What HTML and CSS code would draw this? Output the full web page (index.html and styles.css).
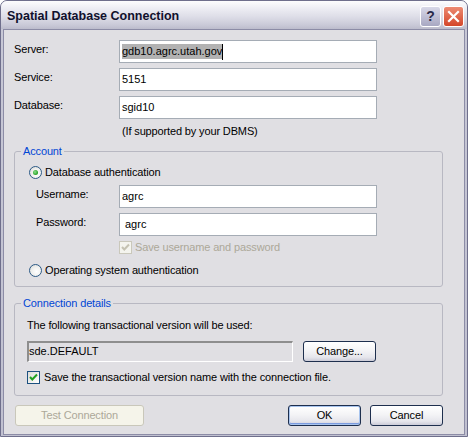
FILE: index.html
```html
<!DOCTYPE html>
<html>
<head>
<meta charset="utf-8">
<title>Spatial Database Connection</title>
<link rel="stylesheet" href="styles.css">
</head>
<body>
<div class="window">
  <div class="titlebar">
    <span class="title">Spatial Database Connection</span>
    <div class="caption-btns">
      <span class="cbtn help">?</span>
      <span class="cbtn close"><svg width="13" height="13" viewBox="0 0 13 13"><path d="M2 2 L11 11 M11 2 L2 11" stroke="#fff" stroke-width="2.2" stroke-linecap="square"/></svg></span>
    </div>
  </div>
  <div class="client">
    <div class="form-grid">
      <label class="lbl">Server:</label>
      <div class="tb"><span class="sel">gdb10.agrc.utah.gov</span><span class="caret"></span></div>
      <label class="lbl">Service:</label>
      <div class="tb">5151</div>
      <label class="lbl">Database:</label>
      <div class="tb">sgid10</div>
    </div>
    <div class="note">(If supported by your DBMS)</div>

    <fieldset class="group account">
      <legend>Account</legend>
      <div class="opt-row radio-first"><span class="radio on"></span><span>Database authentication</span></div>
      <div class="auth-grid">
        <label class="lbl">Username:</label>
        <div class="tb">agrc</div>
        <label class="lbl">Password:</label>
        <div class="tb pw">agrc</div>
      </div>
      <div class="opt-row save-pw disabled"><span class="check off"><svg width="11" height="11" viewBox="0 0 11 11"><path d="M2 5 L4.3 7.5 L9 2.5" fill="none" stroke="#c5c2b2" stroke-width="2"/></svg></span><span>Save username and password</span></div>
      <div class="opt-row radio-os"><span class="radio"></span><span>Operating system authentication</span></div>
    </fieldset>

    <fieldset class="group conn">
      <legend>Connection details</legend>
      <div class="conn-text">The following transactional version will be used:</div>
      <div class="version-row">
        <div class="vbox">sde.DEFAULT</div>
        <span class="btn change">Change...</span>
      </div>
      <div class="opt-row save-ver"><span class="check"><svg width="11" height="11" viewBox="0 0 11 11"><path d="M2 5 L4.3 7.5 L9 2.5" fill="none" stroke="#21a121" stroke-width="2"/></svg></span><span>Save the transactional version name with the connection file.</span></div>
    </fieldset>

    <div class="btn-row">
      <span class="btn test disabled">Test Connection</span>
      <span class="btn ok default">OK</span>
      <span class="btn cancel">Cancel</span>
    </div>
  </div>
</div>
</body>
</html>
```
FILE: styles.css
```css
* { box-sizing: border-box; }
html, body { margin: 0; padding: 0; background: #ffffff; }
body {
  font-family: "Liberation Sans", Arial, sans-serif;
  font-size: 11px;
  line-height: 13px;
  letter-spacing: -0.14px;
  color: #000;
}
.window {
  width: 468px;
  height: 437px;
  border: 1px solid #6f6f8c;
  border-radius: 7px 7px 0 0;
  background: linear-gradient(to bottom, #c8c8d6, #c0c0d0);
  overflow: hidden;
}
.titlebar {
  height: 28px;
  display: flex;
  align-items: center;
  padding: 0 3px 0 6px;
  background: linear-gradient(to bottom, #fdfdfe 0%, #eeeef4 25%, #dedee8 55%, #cacad8 85%, #bcbccc 100%);
}
.title {
  flex: 1;
  font-weight: bold;
  font-size: 12.5px;
  letter-spacing: 0;
  color: #10102c;
  padding-top: 2px;
}
.caption-btns { display: flex; gap: 2px; margin-top: 2px; }
.cbtn {
  width: 21px;
  height: 21px;
  border-radius: 3px;
  border: 1px solid #ffffff;
  display: flex;
  align-items: center;
  justify-content: center;
}
.help {
  background: linear-gradient(to bottom, #d8d8e8, #a8a8c2);
  color: #2a2a48;
  font-weight: bold;
  font-size: 14px;
  letter-spacing: 0;
}
.close {
  background: linear-gradient(to bottom, #ec8a72, #d4462a);
}
.client {
  margin: 0 2px 2px;
  border: 1px solid #8c8ca6;
  background: #e0dfe3;
  padding: 10px 21px 8px 10px;
}
.form-grid {
  display: grid;
  grid-template-columns: 105px 258px;
  row-gap: 5px;
}
.lbl { padding-top: 3px; }
.tb {
  height: 23px;
  border: 1px solid #a5acb5;
  background: #fff;
  padding-left: 2px;
  line-height: 21px;
  letter-spacing: 0;
  display: flex;
  align-items: center;
}
.tb.pw { padding-left: 5px; }
.sel { background: #b2b2b2; line-height: 15px; }
.caret { width: 1px; height: 16px; background: #000; }
.note { margin: 6px 0 0 108px; }

.group {
  margin: 0;
  padding: 0;
  border: 1px solid #b8b8c2;
  border-radius: 3px;
  min-width: 0;
}
.group legend {
  margin-left: 6px;
  padding: 0 2px;
  color: #0046d5;
  line-height: 13px;
}
.account { margin-top: 7px; padding-bottom: 9px; }
.conn { margin-top: 10px; padding-bottom: 11px; }

.opt-row {
  display: flex;
  align-items: center;
  height: 13px;
}
.radio-first { margin: 8px 0 0 14px; gap: 3px; }
.radio-os { margin: 10px 0 0 14px; gap: 3px; }
.radio {
  width: 13px;
  height: 13px;
  border-radius: 50%;
  border: 1px solid #2c5a86;
  background: radial-gradient(circle at 60% 60%, #ffffff 0%, #f0f0ee 50%, #d4d4d0 100%);
  display: flex;
  align-items: center;
  justify-content: center;
}
.radio.on::after {
  content: "";
  width: 5px;
  height: 5px;
  border-radius: 50%;
  background: radial-gradient(circle at 40% 40%, #8ee08e, #21a121 70%);
}
.auth-grid {
  display: grid;
  grid-template-columns: 83px 258px;
  row-gap: 5px;
  margin: 6px 0 0 21px;
}
.save-pw { margin: 5px 0 0 104px; gap: 3px; }
.disabled { color: #aca899; }
.check {
  width: 13px;
  height: 13px;
  border: 1px solid #1c5180;
  background: linear-gradient(135deg, #dcdcd7, #ffffff);
  display: flex;
  align-items: center;
  justify-content: center;
}
.check.off {
  border-color: #cac8bb;
  background: #f4f4ee;
}
.conn-text { margin: 9px 0 0 12px; }
.version-row {
  display: flex;
  gap: 10px;
  margin: 9px 0 0 12px;
}
.vbox {
  width: 266px;
  height: 21px;
  border-style: solid;
  border-width: 2px 1px 1px 2px;
  border-color: #8e8e8e #ffffff #ffffff #8e8e8e;
  background: #e0dfe3;
  padding-left: 0;
  line-height: 17px;
  letter-spacing: 0;
}
.save-ver { margin: 9px 0 0 12px; gap: 4px; }

.btn {
  display: block;
  height: 21px;
  width: 73px;
  border: 1px solid #1e2f4e;
  border-radius: 3px;
  background: linear-gradient(to bottom, #ffffff 0%, #f4f4f6 45%, #e6e6ec 80%, #ccccd8 100%);
  text-align: center;
  line-height: 19px;
}
.btn.default {
  box-shadow: inset 0 0 0 1px #a8c4ee, inset 0 -1px 0 1px #7c9ce0;
}
.btn-row {
  display: flex;
  margin-top: 9px;
}
.btn.test {
  width: 129px;
  margin-left: 1px;
  border-color: #c9c7ba;
  background: #f5f4ea;
  color: #aca899;
}
.btn.ok { margin-left: auto; }
.btn.cancel { margin-left: 9px; }
```
